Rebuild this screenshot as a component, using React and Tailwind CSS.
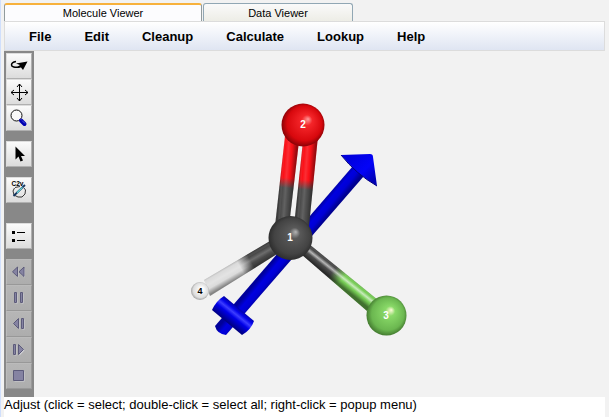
const MENUS = ['File', 'Edit', 'Cleanup', 'Calculate', 'Lookup', 'Help'];

function Icon({ children }) {
  return (
    <svg viewBox="0 0 24 24" className="size-6" aria-hidden="true">
      {children}
    </svg>
  );
}

function RotateIcon() {
  return (
    <Icon>
      <path d="M9 7.500C6 8 4.500 9.500 4.500 11c0 2 3.500 2.800 8 2" fill="none" stroke="#000" strokeWidth="1.500" />
      <path d="M9 9.500L20.500 7.500 16 16l-2-2.500-5 .5 4-3z" fill="#000" />
    </Icon>
  );
}

function MoveIcon() {
  return (
    <Icon>
      <path
        d="M12.500 4v17M4 12.500h17M10 7l2.500-3L15 7M10 18l2.500 3 2.500-3M7 10l-3 2.500L7 15M18 10l3 2.500-3 2.500"
        fill="none"
        stroke="#000"
        strokeWidth="1"
      />
    </Icon>
  );
}

function ZoomIcon() {
  return (
    <Icon>
      <circle cx="9.500" cy="9.500" r="5.500" fill="#f8f8f8" stroke="#111" />
      <path d="M14 14.500l3.500 3.500" stroke="#0000b0" strokeWidth="4" strokeLinecap="round" />
      <path d="M14 13.500l4.500 4.500" stroke="#7d8cff" strokeWidth="1" strokeDasharray="1 1" />
    </Icon>
  );
}

function PointerIcon() {
  return (
    <Icon>
      <path d="M8.500 4.500v13l3-3 2 5 2.500-1-2-4.500h4z" fill="#000" />
    </Icon>
  );
}

function SymmetryIcon() {
  return (
    <Icon>
      <text x="4.500" y="8" fontSize="6.500" fontWeight="bold" fontFamily="Liberation Sans, sans-serif">
        C2v
      </text>
      <path d="M7.500 10l-1.500 3 1 4 4 2h4l3-3 .5-4-1.500-2M8 9.500l5-1" fill="none" stroke="#222" strokeWidth="0.900" />
      <path d="M6.500 18L18 7" stroke="#15355f" strokeWidth="1.800" />
      <path d="M10 14.700L15.500 9.400" stroke="#65dcdc" strokeWidth="1.300" />
    </Icon>
  );
}

function ListIcon() {
  return (
    <Icon>
      <path d="M5 7h3v3H5zM5 15h3v3H5zM10 8h8v1h-8zM10 16h8v1h-8z" fill="#000" />
    </Icon>
  );
}

function PlaybackIcon({ d }) {
  return (
    <Icon>
      <path d={d} transform="translate(1 1)" fill="#d0d0d6" />
      <path d={d} fill="#8583a2" stroke="#5c5b7a" strokeWidth="1" />
    </Icon>
  );
}

const REWIND = 'M10.500 7v9.500l-5-4.700zM17 7v9.500l-5-4.700z';
const PAUSE = 'M7.500 6.500h2v10h-2zM13.500 6.500h2v10h-2z';
const STEP_BACK = 'M11.500 6.500v10l-5-5zM14.500 6.500h2v10h-2z';
const STEP_FORWARD = 'M6.500 6.500h2v10h-2zM11.500 6.500v10l5-5z';
const STOP = 'M6.500 6.500h10v10h-10z';

const TOOL_GROUPS = [
  {
    className: '',
    tools: [
      { label: 'Rotate', icon: <RotateIcon /> },
      { label: 'Translate', icon: <MoveIcon /> },
      { label: 'Zoom', icon: <ZoomIcon /> },
    ],
  },
  { className: 'mt-2.5', tools: [{ label: 'Select', icon: <PointerIcon /> }] },
  { className: 'mt-2.5', tools: [{ label: 'Symmetrize', icon: <SymmetryIcon /> }] },
  { className: 'mt-5', tools: [{ label: 'Options', icon: <ListIcon /> }] },
  {
    className: 'mt-2.5',
    tools: [
      { label: 'Rewind', icon: <PlaybackIcon d={REWIND} />, disabled: true },
      { label: 'Pause', icon: <PlaybackIcon d={PAUSE} />, disabled: true },
      { label: 'Step back', icon: <PlaybackIcon d={STEP_BACK} />, disabled: true },
      { label: 'Step forward', icon: <PlaybackIcon d={STEP_FORWARD} />, disabled: true },
      { label: 'Stop', icon: <PlaybackIcon d={STOP} />, disabled: true },
    ],
  },
];

function ToolButton({ label, icon, disabled }) {
  return (
    <button
      type="button"
      aria-label={label}
      disabled={disabled}
      className="flex size-[26px] items-center justify-center border border-[#b0b0b0] border-t-[#ddd] border-l-[#ddd] bg-linear-to-b from-[#fbfbfb] to-[#dcdcdc] disabled:border-[#989898] disabled:border-t-[#bbb] disabled:border-l-[#bbb] disabled:from-[#b6b6b6] disabled:to-[#adadad]"
    >
      {icon}
    </button>
  );
}

function Toolbar() {
  return (
    <div role="toolbar" aria-label="Tools" className="w-[30px] shrink-0 bg-[#888] px-0.5 pt-0.5 pb-2">
      {TOOL_GROUPS.map((group) => (
        <div key={group.tools[0].label} className={group.className}>
          {group.tools.map((tool) => (
            <ToolButton key={tool.label} {...tool} />
          ))}
        </div>
      ))}
    </div>
  );
}

function Ball({ id, colors }) {
  return (
    <radialGradient id={id} cx="0.500" cy="0.500" r="0.560" fx="0.620" fy="0.360">
      <stop offset="0" stopColor={colors[0]} />
      <stop offset="0.220" stopColor={colors[1]} />
      <stop offset="0.720" stopColor={colors[2]} />
      <stop offset="1" stopColor={colors[3]} />
    </radialGradient>
  );
}

function Shade({ id, x1, y1, x2, y2, glow, edge }) {
  return (
    <linearGradient id={id} gradientUnits="userSpaceOnUse" x1={x1} y1={y1} x2={x2} y2={y2}>
      <stop offset="0" stopColor="#000" stopOpacity={edge / 2} />
      <stop offset="0.200" stopColor="#fff" stopOpacity="0" />
      <stop offset="0.420" stopColor="#fff" stopOpacity={glow} />
      <stop offset="0.640" stopColor="#fff" stopOpacity="0" />
      <stop offset="0.660" stopColor="#000" stopOpacity="0" />
      <stop offset="1" stopColor="#000" stopOpacity={edge} />
    </linearGradient>
  );
}

function Blend({ id, x1, y1, x2, y2, from, to }) {
  return (
    <linearGradient id={id} gradientUnits="userSpaceOnUse" x1={x1} y1={y1} x2={x2} y2={y2}>
      <stop offset="0" stopColor={from} />
      <stop offset="1" stopColor={to} />
    </linearGradient>
  );
}

function Rod({ points, color, shade }) {
  return (
    <>
      <polygon points={points} fill={`url(#${color})`} />
      <polygon points={points} fill={`url(#${shade})`} />
    </>
  );
}

function Molecule() {
  return (
    <svg viewBox="34 51 571 346" role="img" aria-label="Molecule model" className="min-w-0 flex-1">
      <defs>
        <Ball id="oxygen" colors={['#ff9a9a', '#f5262a', '#d8080d', '#670004']} />
        <Ball id="carbon" colors={['#b4b4b4', '#595959', '#434343', '#242424']} />
        <Ball id="fluorine" colors={['#fffbd8', '#89d968', '#6bb750', '#346323']} />
        <Ball id="hydrogen" colors={['#ffffff', '#fafafa', '#dedede', '#8a8a8a']} />
        <Blend id="redGray" x1="288" y1="178" x2="287" y2="188" from="#fb1118" to="#4c4c4c" />
        <Blend id="whiteGray" x1="240" y1="267" x2="251" y2="261" from="#dcdcdc" to="#484848" />
        <Blend id="grayGreen" x1="335" y1="269" x2="344" y2="277" from="#4a4a4a" to="#76cc55" />
        <Shade id="leftRod" x1="280" y1="184" x2="294" y2="185" glow="0.120" edge={0.4} />
        <Shade id="rightRod" x1="299" y1="184" x2="313" y2="185" glow="0.120" edge={0.4} />
        <Shade id="hydrogenRod" x1="236" y1="261" x2="244" y2="275" glow="0.200" edge={0.4} />
        <Shade id="fluorineRod" x1="343" y1="271" x2="335" y2="281" glow="0.600" edge={0.45} />
        <linearGradient id="shaft" gradientUnits="userSpaceOnUse" x1="290" y1="240" x2="301" y2="249">
          <stop offset="0" stopColor="#00009a" />
          <stop offset="0.350" stopColor="#0000df" />
          <stop offset="0.650" stopColor="#0000d4" />
          <stop offset="1" stopColor="#000090" />
        </linearGradient>
        <linearGradient id="bar" gradientUnits="userSpaceOnUse" x1="239" y1="308" x2="227" y2="323">
          <stop offset="0" stopColor="#0000a5" />
          <stop offset="0.200" stopColor="#0505ec" />
          <stop offset="0.360" stopColor="#3d3dff" />
          <stop offset="0.550" stopColor="#0000e8" />
          <stop offset="1" stopColor="#000079" />
        </linearGradient>
        <linearGradient id="head" gradientUnits="userSpaceOnUse" x1="352" y1="154" x2="376" y2="178">
          <stop offset="0" stopColor="#0000dc" />
          <stop offset="0.600" stopColor="#0303f8" />
          <stop offset="1" stopColor="#0000b5" />
        </linearGradient>
      </defs>

      <path d="M353 166L215 326q2 8 11 9L364 176z" fill="url(#shaft)" />
      <path d="M341 155L370 154q3 0 3 3l4 29q-19-11-36-31z" fill="url(#head)" />
      <path d="M341 155q15 19 36 31" fill="none" stroke="#000080" />
      <path d="M224 296L254 321q-3 9-12 14L212 310q4-9 12-14z" fill="url(#bar)" />

      <Rod points="270,241 204,280 210,296 277,254" color="whiteGray" shade="hydrogenRod" />
      <circle cx="200" cy="291" r="9" fill="url(#hydrogen)" />

      <Rod points="309,244 378,300 367,311 301,254" color="grayGreen" shade="fluorineRod" />
      <circle cx="386.500" cy="315.500" r="20" fill="url(#fluorine)" />

      <Rod points="285,136 299,141 289,226 275,226" color="redGray" shade="leftRod" />
      <Rod points="303,141 318,136 309,226 294,226" color="redGray" shade="rightRod" />
      <circle cx="290.500" cy="238" r="22" fill="url(#carbon)" />
      <circle cx="303" cy="125" r="21.500" fill="url(#oxygen)" />

      <g
        fill="#fff"
        fontFamily="Liberation Sans, Arial, sans-serif"
        fontSize="10"
        fontWeight="bold"
        textAnchor="middle"
      >
        <text x="303" y="128">2</text>
        <text x="290" y="241">1</text>
        <text x="386" y="319">3</text>
        <text x="200" y="294" fill="#000" fontSize="9">4</text>
      </g>
    </svg>
  );
}

export default function App() {
  return (
    <div className="flex min-h-screen border-l border-[#d0dffc] bg-[#f2f2f2] pr-1 pl-[3px] font-['Liberation_Sans',Arial,sans-serif] text-black">
      <div className="flex min-w-0 flex-1 flex-col">
        <div role="tablist" className="flex gap-px pt-[3px] text-[11px] leading-[14px]">
          <button
            type="button"
            role="tab"
            aria-selected="true"
            className="h-[18px] w-[198px] rounded-t-[3px] border border-t-2 border-b-0 border-[#919b9c] border-t-[#f7b13c] bg-[#fcfcfe] pb-px"
          >
            Molecule Viewer
          </button>
          <button
            type="button"
            role="tab"
            aria-selected="false"
            className="h-[18px] w-[150px] rounded-t-[3px] border border-b-0 border-[#91a7b4] bg-linear-to-b from-[#fafafa] to-[#ededE6]"
          >
            Data Viewer
          </button>
        </div>
        <nav
          aria-label="Main"
          className="flex h-[30px] items-center gap-[33px] border border-[#dcdcdc] bg-linear-to-b from-white to-[#dfe5f2] pt-px pl-6 text-[13px] leading-4 font-bold"
        >
          {MENUS.map((menu) => (
            <button key={menu} type="button">
              {menu}
            </button>
          ))}
        </nav>
        <main className="flex">
          <Toolbar />
          <Molecule />
        </main>
        <p role="status" className="flex-1 bg-white text-[13px] leading-4">
          Adjust (click = select; double-click = select all; right-click = popup menu)
        </p>
      </div>
    </div>
  );
}
